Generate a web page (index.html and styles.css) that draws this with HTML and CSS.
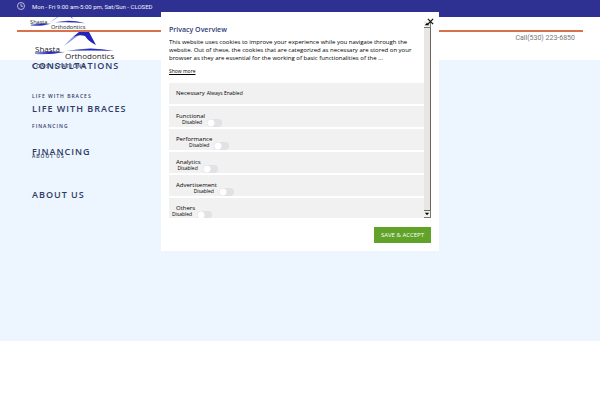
FILE: index.html
```html
<!DOCTYPE html>
<html lang="en">
<head>
    <meta charset="UTF-8">
    <meta name="viewport" content="width=device-width, initial-scale=1.0">
    <title>Shasta Orthodontics</title>
    <link rel="stylesheet" href="styles.css">
</head>
<body>
    <div class="topbar">
        <svg class="clock" viewBox="0 0 16 16" aria-hidden="true">
            <circle cx="8" cy="8" r="7"/>
            <path d="M8 3.5V8.5H12"/>
        </svg>
        <span>Mon - Fri 9:00 am-5:00 pm, Sat/Sun - CLOSED</span>
    </div>

    <header class="header">
        <div class="sticky-bar">
            <a href="#" class="logo-link">
                <svg class="logo-small" viewBox="0 0 80 43">
                    <defs>
                        <linearGradient id="swoosh" x1="0" x2="1">
                            <stop offset="0" stop-color="#8fa2dc"/>
                            <stop offset="0.5" stop-color="#2024c4"/>
                            <stop offset="1" stop-color="#4c55b8"/>
                        </linearGradient>
                    </defs>
                    <path fill="#8d9bdc" d="M29 25 Q34 20 42 15 L44 15 Q36 20 29 25Z"/>
                    <path fill="#2226b8" d="M56 14 H59 L61 20Z"/>
                    <path fill="url(#swoosh)" d="M1 28 Q14 26 30 27 Q15 31 1 30Z"/>
                    <path fill="url(#swoosh)" d="M35 25 Q56 20 79 26 Q56 24 35 25Z"/>
                    <text x="0" y="27">Shasta</text>
                    <text x="30" y="34">Orthodontics</text>
                </svg>
            </a>
        </div>
        <div class="main-bar">
            <a href="#" class="logo-link">
                <svg class="logo-large" viewBox="0 0 80 29">
                    <path fill="#8d9bdc" d="M29 14 Q38 4 44 0 L48 0 Q40 6 29 14Z"/>
                    <path fill="#2226b8" d="M38 5 Q42 2 44 0 H54 L61 13 Q54 10 50 4 Q44 2 38 5Z"/>
                    <path fill="url(#swoosh)" d="M0 20 Q14 19 30 20 Q15 23 0 22Z"/>
                    <path fill="url(#swoosh)" d="M31 19 Q56 14 79 19 Q56 18 31 19Z"/>
                    <text x="0" y="20">Shasta</text>
                    <text x="30" y="27">Orthodontics</text>
                </svg>
            </a>
            <a class="phone" href="tel:5302236850">Call(530) 223-6850</a>
        </div>
    </header>

    <main class="hero">
        <nav class="menu menu-large">
            <a href="#">CONSULTATIONS</a>
            <a href="#">LIFE WITH BRACES</a>
            <a href="#">FINANCING</a>
            <a href="#">ABOUT US</a>
        </nav>
        <nav class="menu menu-small">
            <a href="#">CONSULTATIONS</a>
            <a href="#">LIFE WITH BRACES</a>
            <a href="#">FINANCING</a>
            <a href="#">ABOUT US</a>
        </nav>
    </main>

    <div class="modal" role="dialog" aria-labelledby="privacy-title">
        <button class="close" type="button" aria-label="Close">
            <svg viewBox="0 0 8 8"><path d="M1 1L7 7M7 1L1 7"/></svg>
        </button>
        <div class="modal-body">
            <div class="content">
                <h4 id="privacy-title">Privacy Overview</h4>
                <p>This website uses cookies to improve your experience while you navigate through the website. Out of these, the cookies that are categorized as necessary are stored on your browser as they are essential for the working of basic functionalities of the ...</p>
                <a class="more" href="#">Show more</a>
                <div class="row necessary">
                    <span>Necessary</span>
                    <span class="always">Always Enabled</span>
                </div>
                <div class="row">
                    <label for="functional">Functional</label>
                    <span class="switch"><span class="status">Disabled</span><input type="checkbox" id="functional"></span>
                </div>
                <div class="row">
                    <label for="performance">Performance</label>
                    <span class="switch"><span class="status">Disabled</span><input type="checkbox" id="performance"></span>
                </div>
                <div class="row">
                    <label for="analytics">Analytics</label>
                    <span class="switch"><span class="status">Disabled</span><input type="checkbox" id="analytics"></span>
                </div>
                <div class="row">
                    <label for="advertisement">Advertisement</label>
                    <span class="switch"><span class="status">Disabled</span><input type="checkbox" id="advertisement"></span>
                </div>
                <div class="row">
                    <label for="others">Others</label>
                    <span class="switch"><span class="status">Disabled</span><input type="checkbox" id="others"></span>
                </div>
            </div>
            <div class="scrollbar" aria-hidden="true">
                <svg class="arrow" viewBox="0 0 7 7"><path d="M1 5H6L3.500 2Z"/></svg>
                <div class="thumb"></div>
                <svg class="arrow" viewBox="0 0 7 7"><path d="M1 2H6L3.500 5Z"/></svg>
            </div>
        </div>
        <div class="modal-footer">
            <button class="save" type="button">SAVE &amp; ACCEPT</button>
        </div>
    </div>
</body>
</html>
```
FILE: styles.css
```css
* {
    box-sizing: border-box;
}
body {
    margin: 0;
    background-color: #fff;
    color: #000;
    font-family: "Open Sans", "Noto Sans", sans-serif;
    font-size: 6px;
}
a {
    color: inherit;
    text-decoration: none;
}
.topbar {
    height: 17px;
    padding: 0 17px 5px;
    display: flex;
    align-items: center;
    gap: 7px;
    background-color: #2e3192;
    color: #f0f0fa;
    font-family: Roboto, sans-serif;
}
.clock {
    width: 8px;
    height: 8px;
    fill: none;
    stroke: #e4e4f4;
    stroke-width: 1.5;
}
.header {
    height: 43px;
}
.sticky-bar {
    height: 15px;
    margin: 0 17px;
    padding-left: 13px;
    border-bottom: 2px solid #d9714a;
    overflow: hidden;
}
.sticky-bar .logo-link {
    display: flex;
    align-items: flex-end;
    height: 100%;
}
.logo-small {
    width: 56px;
    height: 30px;
    flex: none;
    margin-bottom: -5px;
}
.logo-large {
    display: block;
    width: 80px;
    height: 29px;
}
.logo-small text,
.logo-large text {
    font-size: 8px;
    fill: #222;
}
.main-bar {
    display: flex;
    justify-content: space-between;
    padding: 0 25px 0 35px;
}
.phone {
    padding-top: 2px;
    font-family: Roboto, sans-serif;
    font-size: 7px;
    line-height: 9px;
    color: #777;
}
.hero {
    display: grid;
    justify-items: start;
    align-items: start;
    height: 281px;
    padding-left: 32px;
    background-color: #edf5ff;
}
/* both menus share one cell */
.menu {
    grid-area: 1 / 1;
    display: flex;
    flex-direction: column;
    color: #2f3b66;
    font-weight: 600;
}
.menu-large {
    gap: 31px;
    font-size: 9px;
    line-height: 12px;
    letter-spacing: 1px;
}
.menu-small {
    gap: 20px;
    padding-top: 1px;
    font-size: 5px;
    line-height: 10px;
    letter-spacing: 1px;
}
.modal {
    position: absolute;
    top: 12px;
    left: 50%;
    transform: translateX(-50%);
    width: 278px;
    padding: 9px 8px 8px;
    background-color: #fff;
}
.close {
    position: absolute;
    top: 6px;
    right: 5px;
    width: 7px;
    height: 7px;
    padding: 0;
    border: 0;
    background: none;
}
.close svg {
    display: block;
    stroke: #111;
    stroke-width: 1.5;
}
.modal-body {
    display: flex;
    height: 197px;
    overflow: hidden;
}
.content {
    flex: 1;
}
h4 {
    margin: 4px 0 3px;
    font-size: 7px;
    line-height: 10px;
    font-weight: 600;
    color: #2f3b76;
}
p {
    margin: 0 0 5px;
    line-height: 8px;
}
.more {
    display: block;
    margin-bottom: 8px;
    font-size: 5px;
    line-height: 8px;
    text-decoration: underline;
}
.row {
    display: flex;
    gap: 2px;
    height: 21px;
    margin-bottom: 2px;
    padding: 6px 7px 0;
    line-height: 9px;
    background-color: #f1f1f1;
}
.always,
.status {
    font-size: 5px;
}
.switch {
    position: relative;
    align-self: flex-end;
    height: 8px;
}
.status {
    position: absolute;
    right: 20px;
    bottom: 0;
}
.switch input {
    appearance: none;
    display: block;
    width: 15px;
    height: 8px;
    margin: 0;
    border-radius: 4px;
    background: radial-gradient(circle at 4px 4px, #fff 3px, transparent 4px) #e1e2e6;
}
.scrollbar {
    display: flex;
    flex-direction: column;
    width: 7px;
    background-color: #e8e6e3;
}
.arrow {
    width: 7px;
    height: 7px;
    background-color: #f2f0ed;
    border-right: 1px solid #777;
    border-bottom: 1px solid #777;
}
.thumb {
    flex: 1;
    border-right: 1px solid #6b6660;
    border-bottom: 1px solid #6b6660;
    background-color: #e8e6e3;
}
.modal-footer {
    display: flex;
    justify-content: flex-end;
    padding-top: 9px;
}
.save {
    height: 16px;
    padding: 0 7px;
    border: 0;
    background-color: #61a229;
    color: #fff;
    font-family: inherit;
    font-size: 6px;
}
```
